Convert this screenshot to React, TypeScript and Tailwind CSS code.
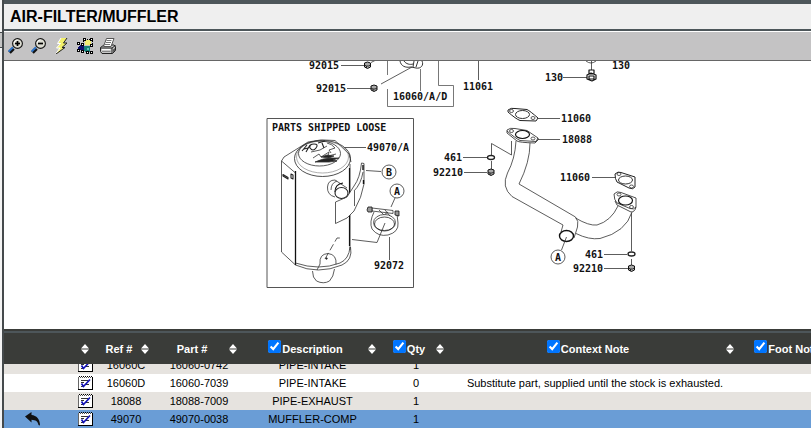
import React, { useEffect, useRef, useState } from 'react'

type Part = {
  id: number;
  refNo: string;
  partNo: string;
  description: string;
  qty: number;
  context?: string;
}

const parts: Part[] = [
  { id: 1, refNo: '16060C', partNo: '16060-0742', description: 'PIPE-INTAKE', qty: 1 },
  { id: 2, refNo: '16060D', partNo: '16060-7039', description: 'PIPE-INTAKE', qty: 0, context: 'Substitute part, supplied until the stock is exhausted.' },
  { id: 3, refNo: '18088', partNo: '18088-7009', description: 'PIPE-EXHAUST', qty: 1 },
  { id: 4, refNo: '49070', partNo: '49070-0038', description: 'MUFFLER-COMP', qty: 1 },
]

function ZoomIcon({ plus }: { plus?: boolean }) {
  return (
    <svg width="16" height="16" viewBox="0 0 16 16">
      <path d="M1.5 14.5L5.5 10.5" stroke="#111" strokeWidth="3.6" />
      <path d="M0.600 13.600L5 9.200" stroke="#2f74c8" strokeWidth="2" />
      <circle cx="9.500" cy="5.500" r="4.900" fill="#dcdcd2" stroke="#111" strokeWidth="1.100" />
      <path d="M6 5A4 4 0 0 1 9.500 1.800" stroke="#fff" fill="none" />
      <path d="M7 5.500h5" stroke="#000" strokeWidth="1.700" />
      {plus && <path d="M9.500 3v5" stroke="#000" strokeWidth="1.700" />}
    </svg>
  )
}

function BoltIcon() {
  return (
    <svg width="16" height="16" viewBox="0 0 16 16">
      <path d="M7 0h6L9.500 5H13L8 9.500h3L2 16l3.500-6H2.500L6.500 5.500H4z" fill="#f3f06a" />
      <path d="M7 0L3.500 5.500h3L2.500 10h3.500L2 15.500" stroke="#fff" fill="none" />
      <path d="M13 0L9.500 5H13L8 9.500h3L2 16" stroke="#222" fill="none" />
    </svg>
  )
}

function SelectIcon() {
  return (
    <svg width="16" height="16" viewBox="0 0 16 16" shapeRendering="crispEdges">
      <path d="M8 2h6v5H8z" fill="#f1ed72" />
      <path d="M8 1h5M15 3v3M6 3v2" stroke="#000" strokeDasharray="1 1" />
      <path d="M1 9l3-2h3v5H4l-3-1z" fill="#10106e" />
      <path d="M7 8h6v6H8l-1-2z" fill="#168078" />
      <path d="M10 10h2v2h-2z" fill="#5cc8b8" />
      {[[6, 0], [13, 0], [0, 4], [4, 5], [13, 6], [0, 11], [4, 12], [13, 13], [9, 13]].map(([x, y]) => (
        <g key={`${x}-${y}`}>
          <rect x={x} y={y} width="3" height="3" fill="#000" />
          <rect x={x + 1} y={y + 1} width="1" height="1" fill="#fff" />
        </g>
      ))}
    </svg>
  )
}

function PrintIcon() {
  return (
    <svg width="16" height="16" viewBox="0 0 16 16">
      <path d="M0.500 9.500L4 7h10l1.500 1.500v4l-3 3H2l-1.500-2z" fill="#c8c8c8" stroke="#222" />
      <path d="M3.500 8.500L6.500 0.500h7.500L11 8.500z" fill="#fff" stroke="#555" />
      <path d="M6.500 2.500h5M6 4.500h5M5 6.500h5" stroke="#777" />
      <path d="M0.500 10h11.500v5.500M12 10l3.500-2.500" stroke="#222" fill="none" />
      <path d="M2 11.500h8.500" stroke="#fff" />
      <path d="M2 13.500h8.500" stroke="#888" />
      <path d="M13 11.500l2-1.500v2.500l-2 2z" fill="#555" />
    </svg>
  )
}

function NoteIcon() {
  return (
    <svg width="15" height="16" viewBox="0 0 15 16" shapeRendering="crispEdges">
      <path d="M1 2h13v13H1z" fill="#fff" />
      <path d="M0 2h1v13H0z" fill="#666" />
      <path d="M0 15h15V2h-1v12H0z" fill="#000" />
      <path d="M1 1.500h13" stroke="#000" strokeDasharray="1 1" />
      <path d="M2 2.500h12" stroke="#555" strokeDasharray="1 1" />
      <path d="M3 5.500h7M3 7.500h3M8 9.500h3M3 11.500h2" stroke="#333" />
      <path d="M3.500 8.500L5.500 11.500L12 4.500" stroke="#1010b8" strokeWidth="1.700" fill="none" shapeRendering="auto" />
    </svg>
  )
}

function BackArrow() {
  return (
    <svg width="16" height="16" viewBox="0 0 16 16">
      <path d="M0 5.500L6.500 1v3C11.500 4.500 15 8 15 14.500l-1.500-0.500C13 10.500 10.500 9 6.500 8.800V11.500z" fill="#111" />
    </svg>
  )
}

function SortButton({ name }: { name: string }) {
  return (
    <button type="button" aria-label={`Sort by ${name}`} className="flex w-[14px] shrink-0 justify-center hover:cursor-pointer">
      <svg width="8" height="10" viewBox="0 0 8 10">
        <path d="M4 0L8 4.500H0zM0 5.500h8L4 10z" fill="#fff" />
      </svg>
    </button>
  )
}

type HeadProps = {
  label: string;
  checkable?: boolean;
}

function HeadCell({ label, checkable }: HeadProps) {
  return (
    <th className="sticky top-0 z-10 bg-[#3a3c39] px-[3px]">
      <div className="flex h-[31px] items-center">
        {checkable ? (
          <label className="flex flex-1 items-baseline justify-center whitespace-nowrap">
            <input type="checkbox" defaultChecked className="mr-px size-[13px]" />
            {label}
          </label>
        ) : (
          <span className="flex-1 whitespace-nowrap">{label}</span>
        )}
        <SortButton name={label} />
      </div>
    </th>
  )
}

const labels: [number, number, string][] = [
  [309, 69, '92015'],
  [316, 92, '92015'],
  [393, 100, '16060/A/D'],
  [463, 90, '11061'],
  [545, 81, '130'],
  [612, 69, '130'],
  [272, 131, 'PARTS SHIPPED LOOSE'],
  [367, 151, '49070/A'],
  [374, 269, '92072'],
  [561, 122, '11060'],
  [562, 143, '18088'],
  [444, 161, '461'],
  [433, 176, '92210'],
  [560, 181, '11060'],
  [585, 258, '461'],
  [573, 272, '92210'],
]

const nuts = [[367.5, 65], [374, 88], [491, 172], [631.5, 268]]
const callouts: [number, number, string][] = [[389, 172, 'B'], [397, 191, 'A'], [558, 257, 'A']]

function Diagram() {
  return (
    <svg width="807" height="268" viewBox="4 61 807 268" fill="none" stroke="#333" strokeWidth="0.8" strokeLinejoin="round" className="block shrink-0">
      {/* frames and leader lines */}
      <path d="M387.500 61v14M387.500 89v17.500h66V85.500h-15V61M420.500 69v22" stroke="#555" />
      <path d="M267 118.500h146.500V287.500H267z" stroke="#555" strokeWidth="1" />
      <path d="M341 65.500h23M347 88.500h24M371 62.500l4-2M381 84l31-17M478.500 61v19M563 77.500h24M591.500 61v9M345 147.500h21M366 170.500l15 1M395 198l-4 9M389.500 237v23" />
      <path d="M538 118.500h22M538 139.500h22M463 157.500h24M464 172.500h23M491.500 155V143.500l20 11.500v-14M491.500 161v8M592 177.500h23M604 254.500h23M604 268.500h24M631.500 213v38M631.500 259v6" />

      {/* upper fitting and bolt */}
      <path d="M400 61c1 5 5 7 11 6l5 1c5 1 8-3 6-7M404 61c2 3 6 4 9 3M414 61l-1 6M418 61l-2 6" strokeWidth="1" />
      <path d="M586 61q5 4 10 0" />
      <path d="M589 70h5v4h-5zM587 75l4-2 5 2v4l-4 2-5-2zM589 76v3h5v-3z" stroke="#111" strokeWidth="1.2" />

      {/* muffler body */}
      <path d="M281.500 161L284 157L308 142Q321 138.500 335 140.500L349 154L351 162M281.500 161V252L295.500 265M281.500 161L295.500 173M350 164V250" />
      <path d="M295.500 171V265" stroke="#111" strokeWidth="1.300" />
      <path d="M349.500 168V246" stroke="#111" strokeWidth="1.200" />
      <ellipse cx="322.500" cy="158.500" rx="28" ry="18" stroke="#222" />
      <ellipse cx="322.500" cy="157" rx="26" ry="16" stroke="#777" strokeWidth="0.600" />
      <ellipse cx="319.500" cy="153.500" rx="21" ry="12.500" />
      <path d="M302 151l5-6M306 152l4-7M304 149l4-1M310 148q-1-4 4-4t2 4t-6 0M318 143l7-2M322 143l2 5" stroke="#222" strokeWidth="1.100" />
      <path d="M327 143q5 1 8 5l-6 2 2 3M311 152l9-2 7-4M313 158l6-4 2 3 8-5-1 4 8-2" />
      <path d="M315 162q8-4 17-4l7 0-6 2 4 1-8 1zM321 157l6-2 7 1-5 2z" fill="#222" />
      <path d="M283 174.500l5 3v1.500l-5-3zM291 174l2 1v4l-2-1z" stroke="#222" strokeWidth="1.100" />
      <path d="M295.500 263Q319 271 340 263Q349 259 350 247M295.500 265Q318 275 342 265Q353 260 350.500 247" />
      <path d="M312.500 271q0 7 4 10q7 3.500 13 0q4-4 5-12" />
      <path d="M320 264q-1-10 8-10.500q9 1 8 11" />
      <path d="M317 270l3-6M325 259l12-21h4" strokeDasharray="7 3" />
      <path d="M352 239.500l25 3L385 223" />
      <circle cx="326.500" cy="258.500" r="0.800" fill="#222" />

      {/* bracket and inlet stub */}
      <path d="M335.500 202v21.500L347 218L354 211Q362 197 364 184V163.500L361.500 163Q360 178 354 186L347 197z" fill="#fff" />
      <path d="M354.500 191v15M363 172Q361 184 354 191" />
      <path d="M363 165v5M363.500 180v4" stroke="#111" strokeWidth="1.400" />
      <path d="M328 190q-2-9 8-10l11 7v10l-9 2z" fill="#fff" stroke="none" />
      <path d="M335 197Q327 195 327.500 187Q328 180 335 180L347 188M337 181Q331 183 331 190" />
      <path d="M343 183Q335 184 335 192" stroke="#111" strokeWidth="1.200" />
      <ellipse cx="341.500" cy="193" rx="6.500" ry="5.500" fill="#fff" stroke="#222" strokeWidth="1.100" />

      {/* clamp */}
      <path d="M374 212Q369 222 372 229Q378 237 388 235Q399 232 398 223L397 214" />
      <ellipse cx="384.500" cy="222.500" rx="11" ry="8" />
      <ellipse cx="384.500" cy="224" rx="10" ry="7" stroke="#222" />
      <path d="M372 208l21 2.500v3L372 211zM379 210l5 5 4-3M385 210l5 6" fill="#fff" />
      <path d="M368 207h4v5h-4l-1-2zM395 211h4v5l-4-1z" fill="#999" stroke="#111" />

      {/* gaskets and flanges */}
      <path d="M508 110Q511 107.500 515 108.500L527 109.500Q530 111 538 118L536 121L520 120.500Q516 119 508 112z" stroke="#222" strokeWidth="1" />
      <ellipse cx="522.500" cy="114.500" rx="7" ry="4" strokeWidth="1" />
      <path d="M507 130Q510 127.500 515 128.500L527 130.500L538 138L536 141.500L520 140.500Q515 138 507 131zM507 131v2l10 8q2 1.500 18 2l3-3v-2" stroke="#222" />
      <ellipse cx="522.500" cy="134.500" rx="7" ry="4" stroke="#111" strokeWidth="1.200" />
      <path d="M615 174Q618 171 621 172.500L635 177V187Q633 190 629 188L617 182Q615 179 615 174z" stroke="#222" strokeWidth="1" />
      <ellipse cx="625.500" cy="180" rx="7" ry="4" strokeWidth="1" />
      <path d="M614 194Q617 190.500 621 192.500L636 198V207Q634 210 630 208.500L617 203Q614 200 614 194zM615 201l2 4 14 7q4 0 5-5" stroke="#222" />
      <ellipse cx="625.500" cy="200.500" rx="7" ry="4.500" stroke="#111" strokeWidth="1.200" />
      {[[511.5, 111], [533, 118], [511.5, 131], [533, 138.5], [619, 174], [631.5, 186.5], [619, 194.5], [631.5, 207]].map(([x, y], i) => (
        <ellipse key={i} cx={x} cy={y} rx="2" ry="1.500" />
      ))}

      {/* exhaust pipes */}
      <path d="M516 141Q515 159 507.500 173Q501 187 512 196.500L563 225M530 143Q530 162 519 184L575.500 217Q579 221 577.500 227L574 238M563 225l-2 7" />
      <path d="M575.500 218Q589 226 597 225Q611 221 618 206M576 233.500Q589 240 600 238.500Q626 232 632 212" />
      <ellipse cx="566.500" cy="236" rx="7" ry="5.500" stroke="#111" strokeWidth="1.400" />
      <path d="M566.500 237l-5 13" />

      {/* washers, nuts */}
      <ellipse cx="491" cy="157.500" rx="3.500" ry="2" stroke="#222" strokeWidth="1.300" />
      <ellipse cx="631.500" cy="254" rx="3.500" ry="2" stroke="#222" strokeWidth="1.300" />
      {nuts.map(([x, y]) => (
        <g key={`${x}-${y}`} stroke="#111">
          <path d={`M${x - 3} ${y - 2}l3-1 3 1v4l-3 1.500-3-1.500z`} fill="#aaa" strokeWidth="1" />
          <path d={`M${x - 3} ${y}l2 1h2l2-1M${x - 1} ${y + 1}v2`} />
        </g>
      ))}

      <g className="font-['DejaVu_Sans_Mono',monospace] text-[10px] font-bold" fill="#111" stroke="none">
        {labels.map(([x, y, text]) => (
          <text key={`${x}-${y}`} x={x} y={y}>{text}</text>
        ))}
      </g>
      {callouts.map(([x, y, text]) => (
        <g key={`${x}-${y}`}>
          <circle cx={x} cy={y} r="7" fill="#fff" />
          <text x={x} y={y + 4} textAnchor="middle" fill="#111" stroke="none" className="font-['DejaVu_Sans_Mono',monospace] text-[10px] font-bold">{text}</text>
        </g>
      ))}
    </svg>
  )
}

function PartsTable() {
  const scroller = useRef<HTMLDivElement>(null);
  const [selected, setSelected] = useState<number>(4);

  // keep the selected part in view at the end of the list
  useEffect(() => {
    if(scroller.current){
      scroller.current.scrollTop = scroller.current.scrollHeight;
    }
  }, [])

  return (
    <div ref={scroller} className="h-[95px] shrink-0 overflow-auto [scrollbar-width:none]">
      <table className="w-full min-w-[844px] table-fixed border-separate border-spacing-0 text-center text-[11px] leading-4">
        <colgroup>
          <col className="w-[70px]" />
          <col className="w-[23px]" />
          <col className="w-[58px]" />
          <col className="w-[88px]" />
          <col className="w-[139px]" />
          <col className="w-[68px]" />
          <col />
          <col className="w-[108px]" />
        </colgroup>
        <thead className="text-white">
          <tr>
            <th className="sticky top-0 z-10 bg-[#3a3c39]"></th>
            <th className="sticky top-0 z-10 bg-[#3a3c39] px-1"><SortButton name="note" /></th>
            <HeadCell label="Ref #" />
            <HeadCell label="Part #" />
            <HeadCell label="Description" checkable />
            <HeadCell label="Qty" checkable />
            <HeadCell label="Context Note" checkable />
            <HeadCell label="Foot Note" checkable />
          </tr>
        </thead>
        <tbody>
          {parts.map((part) => (
            <tr
              key={part.id}
              onClick={() => setSelected(part.id)}
              className={`h-[18px] ${part.id === selected ? 'bg-[#6a9dd6]' : 'odd:bg-[#e6e3df] even:bg-white'}`}
            >
              <td className="p-0 pl-[21px]">{part.id === selected && <BackArrow />}</td>
              <td className="p-0"><div className="flex justify-center"><NoteIcon /></div></td>
              <td className="p-0">{part.refNo}</td>
              <td className="p-0">{part.partNo}</td>
              <td className="p-0">{part.description}</td>
              <td className="p-0">{part.qty}</td>
              <td className="p-0 whitespace-nowrap">{part.context}</td>
              <td className="p-0"></td>
            </tr>
          ))}
        </tbody>
      </table>
    </div>
  )
}

function App() {
  const tool = 'size-4 hover:cursor-pointer';

  return (
    <div className="flex h-screen overflow-hidden bg-white font-['Liberation_Sans',Arial,sans-serif] text-black">
      <div className="w-1 shrink-0 border-r-2 border-[#454a4c] bg-[#f4f4f4]">
        <div className="mt-8 h-4 border-y border-[#454a4c] bg-[#c4c4c4]"></div>
      </div>

      <div className="flex min-w-0 flex-1 flex-col">
        <div className="border-t-4 border-b-2 border-[#4d565a] bg-[#efefef] px-[6px]">
          <h1 className="text-base leading-[25px] font-bold">AIR-FILTER/MUFFLER</h1>
        </div>

        <div className="flex h-[30px] shrink-0 items-center gap-[7px] border-t border-b border-t-white border-b-[#666] bg-[#c4c3c4] px-1">
          <button type="button" aria-label="Zoom in" className={tool}><ZoomIcon plus /></button>
          <button type="button" aria-label="Zoom out" className={tool}><ZoomIcon /></button>
          <button type="button" aria-label="Quick view" className={tool}><BoltIcon /></button>
          <button type="button" aria-label="Select parts" className={tool}><SelectIcon /></button>
          <button type="button" aria-label="Print" className={tool}><PrintIcon /></button>
        </div>

        <div className="min-h-0 flex-1 overflow-hidden">
          <Diagram />
        </div>

        <div className="h-1 shrink-0 border-t-2 border-[#3a3c39] bg-[#4d565a]"></div>
        <PartsTable />
      </div>
    </div>
  )
}

export default App
